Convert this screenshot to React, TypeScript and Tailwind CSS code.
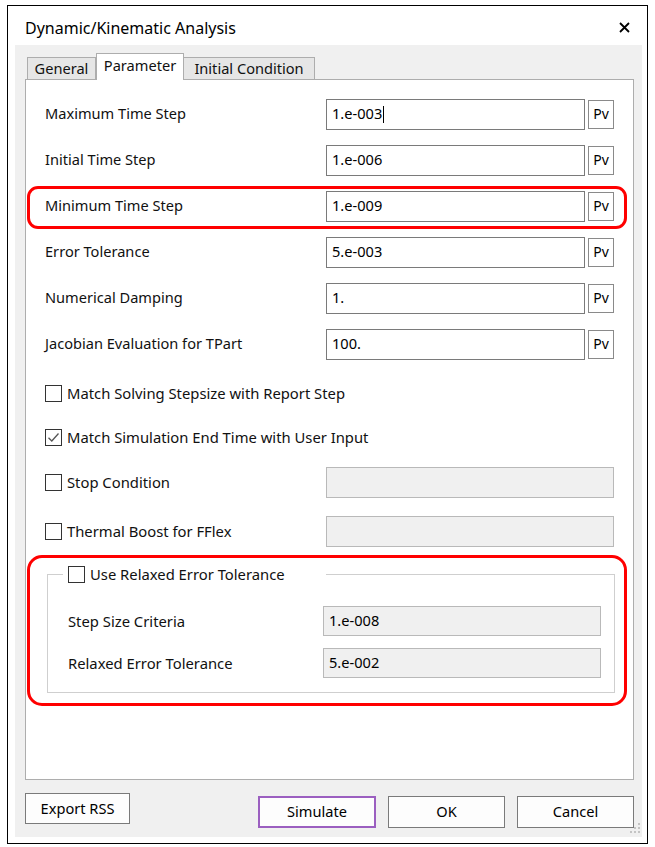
import React from 'react'

const font = { fontFamily: '"Noto Sans", "Open Sans", Arial, sans-serif' }

function Pv() {
  return (
    <button className="ml-[3px] w-[26px] h-[29px] border border-[#8a8a8a] bg-white text-[14px] text-black flex items-center justify-center leading-none">
      Pv
    </button>
  )
}

function ParamRow({ label, value, caret }: { label: string; value: string; caret?: boolean }) {
  return (
    <div className="flex items-center h-[46px] pl-[19px]">
      <div className="w-[281px] text-[14.6px] text-[#111]">{label}</div>
      <div className="w-[259px] h-[31px] border border-[#7a7a7a] bg-white pl-[5px] flex items-center text-[14.6px] text-black">
        {value}
        {caret && <span className="ml-px inline-block w-px h-[17px] bg-black" />}
      </div>
      <Pv />
    </div>
  )
}

function CheckBox({ checked }: { checked?: boolean }) {
  return (
    <span className="w-[17px] h-[17px] border border-[#333] bg-white flex items-center justify-center shrink-0">
      {checked && (
        <svg width="13" height="13" viewBox="0 0 13 13">
          <path d="M1.5 6.8 L4.8 10 L11.5 2.5" fill="none" stroke="#555" strokeWidth="1.3" />
        </svg>
      )}
    </span>
  )
}

function CheckRow({ label, checked, field, h = 'h-[44px]' }: { label: string; checked?: boolean; field?: boolean; h?: string }) {
  return (
    <div className={`flex items-center pl-[19px] ${h}`}>
      <div className="w-[281px] shrink-0 flex items-center gap-[5px] text-[14.8px] text-[#111] whitespace-nowrap">
        <CheckBox checked={checked} />
        <span>{label}</span>
      </div>
      {field && <div className="w-[288px] h-[31px] border border-[#b9b9b9] bg-[#f0f0f0]" />}
    </div>
  )
}

function GroupRow({ label, value }: { label: string; value: string }) {
  return (
    <div className="flex items-center h-[42px] pl-[20px]">
      <div className="w-[255px] text-[14.8px] text-[#111]">{label}</div>
      <div className="w-[278px] h-[30px] border border-[#b9b9b9] bg-[#f0f0f0] pl-[5px] flex items-center text-[14.6px] text-black">
        {value}
      </div>
    </div>
  )
}

function Btn({ label, className = '' }: { label: string; className?: string }) {
  return (
    <button className={`bg-[#fdfdfd] text-[14.6px] text-black flex items-center justify-center ${className}`}>
      {label}
    </button>
  )
}

export default function App() {
  return (
    <div className="w-[655px] h-[847px] bg-white pt-[5px] pl-[7px]" style={font}>
      <div className="w-[641px] h-[839px] border border-black bg-white flex flex-col">
        {/* title bar */}
        <div className="h-[39px] shrink-0 flex items-center justify-between pl-[17px] pr-[17px] pt-[4px]">
          <span className="text-[16px] text-black">Dynamic/Kinematic Analysis</span>
          <svg width="11" height="11" viewBox="0 0 11 11">
            <path d="M1 1 L10 10 M10 1 L1 10" stroke="#000" strokeWidth="1.8" />
          </svg>
        </div>

        <div className="relative flex-1 ml-[7px] mr-[5px] mb-[6px] bg-[#f0f0f0] pl-[10px] pr-[8px] pt-[8px] flex flex-col">
          {/* tabs */}
          <div className="flex items-end h-[26px] pl-[2px] relative z-10">
            <div className="h-[22px] w-[69px] border border-b-0 border-[#adadad] bg-[#e6e6e6] flex items-center justify-center text-[14.6px] text-[#111]">
              General
            </div>
            <div className="h-[27px] -mb-px w-[88px] border border-b-0 border-[#adadad] bg-white flex items-start pt-[1px] justify-center text-[14.6px] text-[#111]">
              Parameter
            </div>
            <div className="h-[22px] w-[131px] border border-b-0 border-l-0 border-[#adadad] bg-[#e6e6e6] flex items-center justify-center text-[14.6px] text-[#111]">
              Initial Condition
            </div>
          </div>

          {/* panel */}
          <div className="h-[701px] border border-[#adadad] bg-white pt-[11px] flex flex-col">
            <ParamRow label="Maximum Time Step" value="1.e-003" caret />
            <ParamRow label="Initial Time Step" value="1.e-006" />
            <div className="relative">
              <ParamRow label="Minimum Time Step" value="1.e-009" />
              <div className="absolute left-px top-[3px] w-[600px] h-[43px] border-[3px] border-[#ff0000] rounded-[11px] pointer-events-none" />
            </div>
            <ParamRow label="Error Tolerance" value="5.e-003" />
            <ParamRow label="Numerical Damping" value="1." />
            <ParamRow label="Jacobian Evaluation for TPart" value="100." />

            <div className="mt-[4px]">
              <CheckRow label="Match Solving Stepsize with Report Step" />
              <CheckRow label="Match Simulation End Time with User Input" checked />
              <CheckRow label="Stop Condition" field h="h-[46px]" />
              <CheckRow label="Thermal Boost for FFlex" field h="h-[46px] mt-[3px]" />
            </div>

            <div className="relative pt-[10px]">
              <fieldset className="ml-[21px] w-[568px] border border-[#cfcfcf] pb-[8px]">
                <legend className="ml-[15px] w-[263px] h-[20px] pl-[5px] flex items-center gap-[5px] text-[14.8px] text-[#111] whitespace-nowrap">
                  <CheckBox />
                  <span>Use Relaxed Error Tolerance</span>
                </legend>
                <div className="mt-[16px]">
                  <GroupRow label="Step Size Criteria" value="1.e-008" />
                  <GroupRow label="Relaxed Error Tolerance" value="5.e-002" />
                </div>
              </fieldset>
              <div className="absolute left-px top-px w-[600px] h-[151px] border-[3px] border-[#ff0000] rounded-[15px] pointer-events-none" />
            </div>
          </div>

          {/* buttons */}
          <div className="flex items-start mt-[13px]">
            <Btn label="Export RSS" className="w-[105px] h-[31px] border border-[#7a7a7a]" />
            <div className="flex-1" />
            <div className="flex items-start mt-[3px] gap-[12px]">
              <Btn label="Simulate" className="w-[118px] h-[32px] border-2 border-[#9b5fc0]" />
              <Btn label="OK" className="w-[117px] h-[32px] border border-[#7a7a7a]" />
              <Btn label="Cancel" className="w-[117px] h-[32px] border border-[#7a7a7a]" />
            </div>
          </div>

          {/* resize grip */}
          <svg className="absolute right-[1px] bottom-[3px]" width="12" height="12" viewBox="0 0 12 12">
            <rect x="9" y="1" width="2" height="2" fill="#c4c4c4" />
            <rect x="9" y="5" width="2" height="2" fill="#c4c4c4" />
            <rect x="5" y="5" width="2" height="2" fill="#c4c4c4" />
            <rect x="9" y="9" width="2" height="2" fill="#c4c4c4" />
            <rect x="5" y="9" width="2" height="2" fill="#c4c4c4" />
            <rect x="1" y="9" width="2" height="2" fill="#c4c4c4" />
          </svg>
        </div>
      </div>
    </div>
  )
}
